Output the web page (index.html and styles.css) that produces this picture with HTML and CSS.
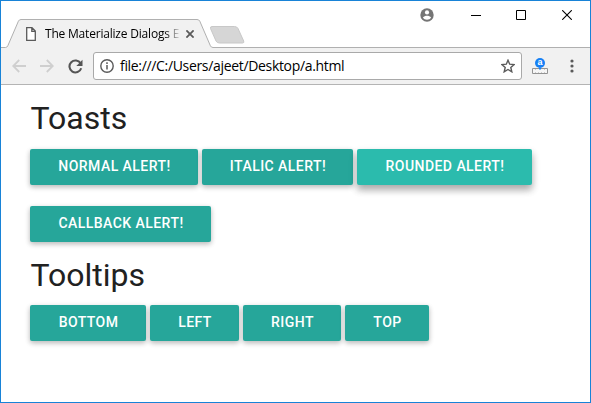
FILE: index.html
```
<!DOCTYPE html>
<html lang="en">
<head>
<meta charset="utf-8">
<title>The Materialize Dialogs Example</title>
<link rel="stylesheet" href="styles.css">
</head>
<body>
<div class="window">
  <header class="titlebar">
    <svg class="strip" viewBox="1 1 589 47" width="589" height="47">
      <path d="M1 47.5H5.5Q7 47.5 7.8 45.8L18.4 21.2Q19.2 19.5 21 19.5H197Q199 19.5 199.8 21.2L210.4 45.8Q211.2 47.5 213 47.5H590V49H1Z" fill="#f1f1f1" stroke="#b0b0b0"/>
      <path d="M212 26.5H234.5Q237 26.5 238 28.5L243.7 41Q244.4 43 242.5 43H219.5Q217 43 216 41L210.5 28.5Q210 26.5 212 26.5Z" fill="#d6d6d6" stroke="#c8c8c8"/>
    </svg>
    <div class="tab">
      <svg class="doc" viewBox="0 0 10 14" width="10" height="14"><path d="M.7.7H6L9.3 4V13.3H.7ZM5.8.7V4.3H9.3" fill="#fff" stroke="#5a5a5a" stroke-width="1.3"/></svg>
      <span class="tab-title">The Materialize Dialogs E</span>
      <svg class="tab-close" viewBox="0 0 8 8" width="8" height="8"><path d="M.4.4 7.6 7.6M7.6.4.4 7.6" stroke="#5a5a5a" stroke-width="1.8"/></svg>
    </div>
    <div class="controls">
      <svg viewBox="0 0 14 14" width="14" height="14"><circle cx="7" cy="7" r="6.7" fill="#757575"/><circle cx="7" cy="4.4" r="2.1" fill="#fff"/><path d="M2.9 9.6C3.8 8.2 5.6 7.7 7 7.7S10.2 8.2 11.1 9.6C10.2 11 8.7 11.8 7 11.8S3.8 11 2.9 9.6Z" fill="#fff"/></svg>
      <svg class="min" viewBox="0 0 10 10" width="10" height="10"><path d="M0 5.5H10" stroke="#000"/></svg>
      <svg class="max" viewBox="0 0 10 10" width="10" height="10"><path d="M.5.5H9.5V9.5H.5Z" fill="none" stroke="#000"/></svg>
      <svg class="exit" viewBox="0 0 10 10" width="10" height="10"><path d="M.2.2 9.8 9.8M9.8.2.2 9.8" stroke="#000" stroke-width="1.1"/></svg>
    </div>
  </header>
  <nav class="toolbar">
    <svg class="back" viewBox="0 0 14 14" width="14" height="14"><path d="M14 7H1.5M7.2 1 1.2 7 7.2 13" fill="none" stroke="#cfcfcf" stroke-width="1.8"/></svg>
    <svg class="forward" viewBox="0 0 14 14" width="14" height="14"><path d="M0 7H12.5M6.8 1 12.8 7 6.8 13" fill="none" stroke="#cfcfcf" stroke-width="1.8"/></svg>
    <svg class="reload" viewBox="0 0 15 15" width="15" height="15"><path d="M12.6 4.3A6 6 0 1 0 13.2 9.3" fill="none" stroke="#555" stroke-width="2.1"/><path d="M14.5.8V7H8.3Z" fill="#555"/></svg>
    <div class="address">
      <svg class="info" viewBox="0 0 14 14" width="14" height="14"><circle cx="7" cy="7" r="6.2" fill="none" stroke="#5a5a5a" stroke-width="1.4"/><path d="M7 6.1V10.5M7 3.3V4.9" stroke="#5a5a5a" stroke-width="1.5"/></svg>
      <span class="url">file:///C:/Users/ajeet/Desktop/a.html</span>
      <svg class="star" viewBox="0 0 14 14" width="14" height="14"><path d="M7 1.2 8.7 5.2 13.1 5.6 9.8 8.5 10.8 12.8 7 10.5 3.2 12.8 4.2 8.5 .9 5.6 5.3 5.2Z" fill="none" stroke="#5a5a5a" stroke-width="1.4"/></svg>
    </div>
    <div class="extension">
      <span class="ext-dot">a</span>
      <svg viewBox="0 0 16 6" width="16" height="6"><path d="M.5 .5H15.5V5.5H.5Z" fill="#f6f6f6" stroke="#949494"/><path d="M3.5 4.5V5M6.5 4.5V5M9.5 4.5V5M12.5 4.5V5M3.5 1V1.5M12.5 1V1.5" stroke="#a0a0a0"/><path d="M8 0V1.5" stroke="#1680f5" stroke-width="2"/></svg>
    </div>
    <svg class="menu" viewBox="0 0 4 14" width="4" height="14"><g fill="#5a5a5a"><circle cx="2" cy="2" r="1.6"/><circle cx="2" cy="7" r="1.6"/><circle cx="2" cy="12" r="1.6"/></g></svg>
  </nav>
  <main class="page">
    <h4 class="heading">Toasts</h4>
    <div class="buttons toasts">
      <button class="btn normal">NORMAL ALERT!</button>
      <button class="btn italic">ITALIC ALERT!</button>
      <button class="btn rounded">ROUNDED ALERT!</button>
      <button class="btn callback">CALLBACK ALERT!</button>
    </div>
    <h4 class="heading second">Tooltips</h4>
    <div class="buttons">
      <button class="btn bottom">BOTTOM</button>
      <button class="btn left">LEFT</button>
      <button class="btn right">RIGHT</button>
      <button class="btn top">TOP</button>
    </div>
  </main>
</div>
</body>
</html>
```
FILE: styles.css
```
* { box-sizing: border-box; }
body { margin: 0; background: #fff; }
svg { display: block; flex: none; }
.window {
  width: 591px;
  height: 403px;
  border: 1px solid #1883d7;
  overflow: hidden;
  font-family: "Open Sans", "Noto Sans", sans-serif;
}
.titlebar {
  display: grid;
  grid-template-columns: 1fr 170px;
  height: 47px;
}
.strip { grid-area: 1 / 1 / 2 / 3; }
.tab {
  grid-area: 1 / 1;
  display: flex;
  align-items: center;
  height: 28px;
  margin-top: 19px;
  padding-left: 25px;
}
.tab-title {
  width: 134px;
  margin-left: 9px;
  overflow: hidden;
  white-space: nowrap;
  font-size: 12px;
  line-height: 16px;
  letter-spacing: -0.2px;
  color: transparent;
  background: linear-gradient(90deg, #000 0, #000 120px, #eee 136px);
  background-clip: text;
  -webkit-background-clip: text;
}
.tab-close { margin-left: 7px; }
.controls {
  grid-area: 1 / 2;
  display: flex;
  align-items: center;
  height: 28px;
}
.min { margin-left: 37px; }
.max { margin-left: 35px; }
.exit { margin-left: 36px; }
.toolbar {
  display: flex;
  align-items: center;
  height: 37px;
  padding-left: 11px;
  background: #f1f1f1;
  border-bottom: 1px solid #b4b4b4;
}
.forward { margin-left: 14px; }
.reload { margin-left: 14px; }
.address {
  display: flex;
  align-items: center;
  width: 429px;
  height: 28px;
  margin-left: 10px;
  padding-left: 6px;
  background: #fff;
  border: 1px solid #a9a9a9;
  border-radius: 3px;
}
.url {
  width: 381px;
  margin-left: 6px;
  font-size: 14px;
  line-height: 20px;
  letter-spacing: -0.33px;
  color: #000;
  white-space: nowrap;
}
.extension {
  display: flex;
  flex-direction: column;
  align-items: center;
  width: 16px;
  margin-left: 10px;
}
.ext-dot {
  width: 10px;
  height: 10px;
  border-radius: 50%;
  background: #1680f5;
  color: #fff;
  font: bold 9px/9px "Liberation Sans", sans-serif;
  text-align: center;
}
.menu { margin-left: 22px; }
.page {
  padding: 13px 29px 0;
  font-family: Roboto, sans-serif;
}
.heading {
  height: 51px;
  margin: 0;
  font-size: 32px;
  font-weight: 400;
  line-height: 41px;
  padding-left: .5px;
  color: #212121;
}
.second { line-height: 43px; }
.buttons {
  display: flex;
  flex-wrap: wrap;
  gap: 21px 4px;
}
.toasts { margin-bottom: 12px; }
.btn {
  height: 36px;
  padding: 0 0 2px 1px;
  border: 0;
  border-radius: 2px;
  background: #26a69a;
  box-shadow: 0 2px 5px rgba(0,0,0,.2), 0 2px 6px rgba(0,0,0,.1);
  color: #fff;
  font: 500 14px/34px Roboto, sans-serif;
  letter-spacing: .45px;
}
.normal { width: 168px; }
.italic { width: 151px; }
.rounded {
  width: 175px;
  background: #2bbbad;
  box-shadow: 0 5px 7px rgba(0,0,0,.24), 0 4px 10px rgba(0,0,0,.14);
}
.callback { width: 181px; }
.bottom { width: 116px; }
.left { width: 89px; }
.right { width: 98px; }
.top { width: 84px; }
```
